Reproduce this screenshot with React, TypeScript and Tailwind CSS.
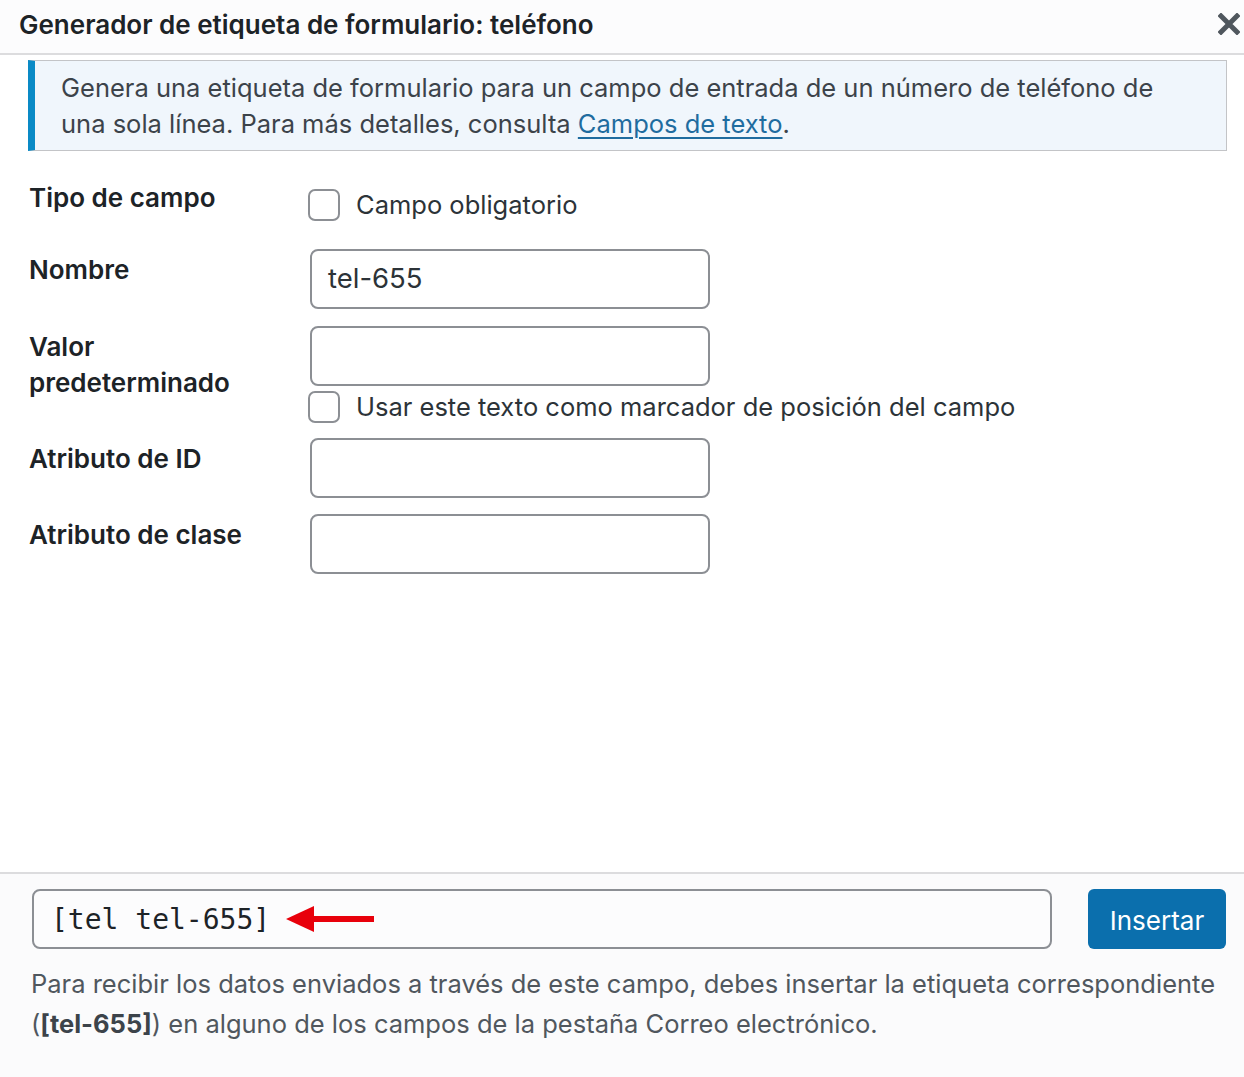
import React from "react";

const font = { fontFamily: "Inter, 'Noto Sans', sans-serif" };

function Checkbox() {
  return <span className="inline-block w-[32px] h-[32px] shrink-0 rounded-[7px] border-2 border-[#8c8f94] bg-white" />;
}

function Input({ value }: { value?: string }) {
  return (
    <div className="w-[400px] h-[60px] rounded-[8px] border-2 border-[#8c8f94] bg-white flex items-center pl-[16px] text-[27.5px] text-[#2c3338]">
      {value}
    </div>
  );
}

export default function App() {
  return (
    <div className="w-[1244px] h-[1077px] bg-white flex flex-col text-[#1d2327] overflow-hidden" style={font}>
      {/* Header */}
      <div className="h-[53px] shrink-0 bg-[#fcfcfd] border-b-2 border-[#dcdcde] flex items-center justify-between pl-[19px] pr-[4px] box-content">
        <div className="text-[26px] font-semibold text-[#1d2327] -mt-[5px]">Generador de etiqueta de formulario: teléfono</div>
        <svg width="22" height="22" viewBox="0 0 22 22" className="mb-[6px]">
          <path d="M3 3 L19 19 M19 3 L3 19" stroke="#50575e" strokeWidth="5" strokeLinecap="square" />
        </svg>
      </div>

      {/* Body */}
      <div className="flex-1 flex flex-col pl-[28px] pr-[17px]">
        <div className="mt-[5px] border border-[#c3c4c7] border-l-[7px] border-l-[#0a8ac6] bg-[#f0f6fc] pl-[26px] pt-[9px] pb-[8px] text-[25.5px] leading-[36px] text-[#3c434a]">
          Genera una etiqueta de formulario para un campo de entrada de un número de teléfono de
          <br />
          una sola línea. Para más detalles, consulta{" "}
          <span className="text-[#1f6c9f] underline underline-offset-[4px] decoration-[2px]">Campos de texto</span>.
        </div>

        <div className="flex flex-col pl-[1px]">
          {/* Row 1 */}
          <div className="flex mt-[29px]">
            <div className="w-[279px] text-[26px] leading-[36px] font-semibold">Tipo de campo</div>
            <div className="flex items-center gap-[16px] mt-[9px] h-[32px]">
              <Checkbox />
              <span className="text-[25.5px] text-[#2c3338]">Campo obligatorio</span>
            </div>
          </div>
          {/* Row 2 */}
          <div className="flex mt-[28px]">
            <div className="w-[281px] pt-[3px] text-[26px] leading-[36px] font-semibold">Nombre</div>
            <Input value="tel-655" />
          </div>
          {/* Row 3 */}
          <div className="flex mt-[17px]">
            <div className="w-[281px] pt-[3px] text-[26px] leading-[36px] font-semibold">
              Valor
              <br />
              predeterminado
            </div>
            <div className="flex flex-col">
              <Input />
              <div className="flex items-center gap-[16px] mt-[5px] h-[32px] -ml-[2px]">
                <Checkbox />
                <span className="text-[25.5px] text-[#2c3338]">Usar este texto como marcador de posición del campo</span>
              </div>
            </div>
          </div>
          {/* Row 4 */}
          <div className="flex mt-[15px]">
            <div className="w-[281px] pt-[3px] text-[26px] leading-[36px] font-semibold">Atributo de ID</div>
            <Input />
          </div>
          {/* Row 5 */}
          <div className="flex mt-[16px]">
            <div className="w-[281px] pt-[3px] text-[26px] leading-[36px] font-semibold">Atributo de clase</div>
            <Input />
          </div>
        </div>
      </div>

      {/* Footer */}
      <div className="h-[205px] shrink-0 bg-[#fbfbfc] border-t-2 border-[#dcdcde] pl-[32px] pr-[18px] pt-[15px]">
        <div className="flex items-center">
          <div className="w-[1020px] h-[60px] rounded-[8px] border-2 border-[#8c8f94] bg-[#fcfcfd] flex items-center pl-[17px]">
            <span className="text-[28px] text-[#1d2327] mt-[1px]" style={{ fontFamily: "'DejaVu Sans Mono', 'Liberation Mono', monospace" }}>
              [tel tel-655]
            </span>
            <svg width="92" height="30" viewBox="0 0 92 30" className="ml-[16px]">
              <polygon points="0,15 28,2 28,28" fill="#e8000b" />
              <rect x="26" y="12" width="62" height="6" fill="#e8000b" />
            </svg>
          </div>
          <div className="ml-[36px] w-[138px] h-[60px] rounded-[6px] bg-[#0b6fad] text-white text-[26px] flex items-center justify-center pt-[2px]">
            Insertar
          </div>
        </div>
        <div className="mt-[15px] -ml-[1px] text-[25.5px] leading-[40px] text-[#50575e]">
          Para recibir los datos enviados a través de este campo, debes insertar la etiqueta correspondiente
          <br />
          (<b className="text-[#3c434a]">[tel-655]</b>) en alguno de los campos de la pestaña Correo electrónico.
        </div>
      </div>
    </div>
  );
}
